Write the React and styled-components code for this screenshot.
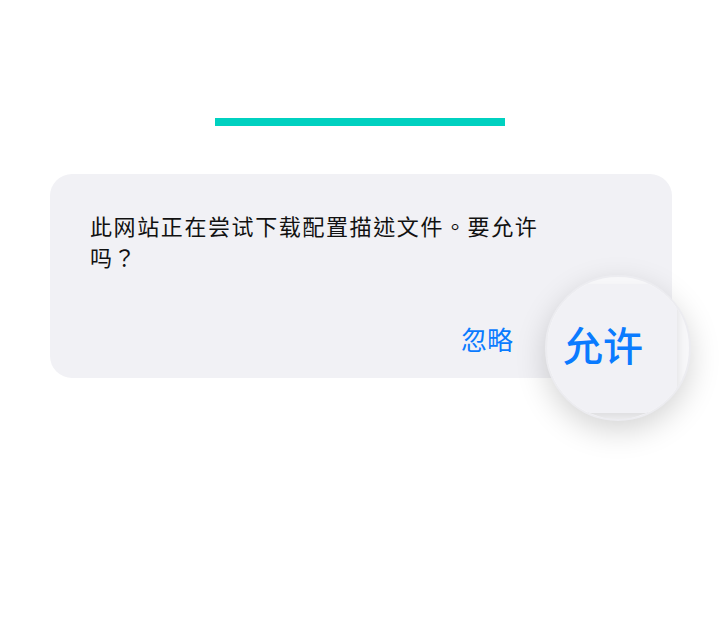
import React from 'react';
import styled, { createGlobalStyle } from 'styled-components';

const GlobalStyle = createGlobalStyle`
  html, body {
    margin: 0;
    padding: 0;
    background: #ffffff;
  }
  body {
    font-family: "Noto Sans CJK SC", "Noto Sans", sans-serif;
  }
`;

const Page = styled.div`
  width: 720px;
  height: 639px;
  padding-top: 118px;
  box-sizing: border-box;
  display: flex;
  flex-direction: column;
`;

const AccentBar = styled.div`
  align-self: center;
  width: 290px;
  height: 8px;
  background: #00d1c0;
`;

const Card = styled.div`
  position: relative;
  margin: 48px 0 0 50px;
  width: 622px;
  height: 204px;
  box-sizing: border-box;
  padding: 36px 40px 0 40px;
  border-radius: 22px;
  background: #f1f1f5;
  display: flex;
  flex-direction: column;
`;

const Message = styled.p`
  margin: 0;
  width: 462px;
  font-family: "Noto Sans CJK TC", "Noto Sans CJK SC", sans-serif;
  font-size: 22px;
  line-height: 31px;
  letter-spacing: 1.6px;
  color: #111111;
`;

const Actions = styled.div`
  display: flex;
  align-items: center;
  margin-top: 52px;
  padding-left: 371px;
`;

const ActionButton = styled.button`
  border: none;
  background: none;
  padding: 0;
  font-family: inherit;
  font-size: 26px;
  line-height: 30px;
  color: #0a7bff;
  cursor: pointer;
`;

const Magnifier = styled.button`
  position: absolute;
  left: 495px;
  top: 101px;
  width: 146px;
  height: 146px;
  padding: 0;
  box-sizing: border-box;
  border-radius: 50%;
  border: 2px solid #ececf0;
  background: #f7f7f9;
  overflow: hidden;
  cursor: pointer;
  font-family: inherit;
  box-shadow: 0 10px 30px rgba(0, 0, 0, 0.17);
`;

const MagnifiedCard = styled.div`
  width: 130px;
  height: 129px;
  background: #f1f1f5;
  box-sizing: border-box;
  padding: 37px 0 0 16px;
  text-align: left;
  box-shadow: 0 6px 10px rgba(0, 0, 0, 0.1);
`;

const MagnifiedLabel = styled.span`
  display: block;
  font-size: 40px;
  line-height: 46px;
  font-weight: 500;
  color: #0a7bff;
  white-space: nowrap;
`;

export default function App() {
  return (
    <>
      <GlobalStyle />
      <Page>
        <AccentBar />
        <Card>
          <Message>此网站正在尝试下载配置描述文件。要允许吗？</Message>
          <Actions>
            <ActionButton>忽略</ActionButton>
          </Actions>
          <Magnifier>
            <MagnifiedCard>
              <MagnifiedLabel>允许</MagnifiedLabel>
            </MagnifiedCard>
          </Magnifier>
        </Card>
      </Page>
    </>
  );
}
